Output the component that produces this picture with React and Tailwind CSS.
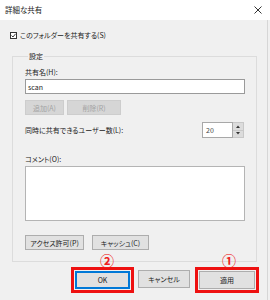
import React from 'react';

const font = { fontFamily: '"Noto Sans CJK JP", "Noto Sans", sans-serif' };

const Btn = ({ children, className = '' }) => (
  <div className={`flex items-center justify-center bg-[#e1e1e1] border border-[#adadad] text-[#1a1a1a] ${className}`}>
    {children}
  </div>
);

const App = () => {
  return (
    <div
      className="w-[270px] h-[300px] bg-[#f0f0f0] flex flex-col text-[7px] leading-[10px] text-[#1a1a1a] [font-feature-settings:'palt'] overflow-hidden"
      style={font}
    >
      {/* Title bar */}
      <div className="h-[20px] bg-white flex items-center justify-between pl-[5px] pr-[8px] shrink-0">
        <span className="text-[7.5px] text-[#222]">詳細な共有</span>
        <svg width="8" height="8" viewBox="0 0 8 8">
          <path d="M0.5 0.5 L7.5 7.5 M7.5 0.5 L0.5 7.5" stroke="#333" strokeWidth="1" />
        </svg>
      </div>

      <div className="flex flex-1">
        <div className="w-[268px] border-r border-[#d6d6d6] flex flex-col">
          {/* Share checkbox */}
          <div className="h-[10px] mt-[10px] ml-[10px] flex items-center gap-[3px]">
            <div className="w-[7px] h-[7px] border border-[#333] bg-white flex items-center justify-center">
              <svg width="5" height="5" viewBox="0 0 5 5">
                <path d="M0.5 2.5 L2 4 L4.6 0.8" stroke="#222" strokeWidth="0.9" fill="none" />
              </svg>
            </div>
            <span>このフォルダーを共有する(S)</span>
          </div>

          {/* Settings group */}
          <fieldset className="ml-[12px] mt-[11px] w-[245px] border border-[#dcdcdc] pl-[12px] pr-[11px] pb-[11px]">
            <legend className="ml-[3px] px-[1px] leading-[10px]">設定</legend>

            <div className="mt-[6px]">共有名(H):</div>
            <div className="mt-[2px] h-[15px] bg-white border border-[#9a9a9a] flex items-center pl-[2px]">scan</div>

            <div className="mt-[6px] flex gap-[3px]">
              <div className="w-[39px] h-[15px] bg-[#d6d6d6] border border-[#cdcdcd] text-[#a3a3a3] flex items-center justify-center">追加(A)</div>
              <div className="w-[54px] h-[15px] bg-[#d6d6d6] border border-[#cdcdcd] text-[#a3a3a3] flex items-center justify-center">削除(R)</div>
            </div>

            <div className="mt-[7px] h-[16px] flex items-center justify-between">
              <span>同時に共有できるユーザー数(L):</span>
              <div className="flex h-[16px] mr-[1px]">
                <div className="w-[31px] bg-white border border-[#a8a8a8] flex items-center pl-[3px] text-[#444]">20</div>
                <div className="w-[11px] flex flex-col bg-[#dcdcdc] border border-l-0 border-[#c8c8c8]">
                  <div className="flex-1 flex items-center justify-center border-b border-[#c8c8c8]">
                    <svg width="4" height="3" viewBox="0 0 4 3"><path d="M0 3 L2 0.5 L4 3 Z" fill="#333" /></svg>
                  </div>
                  <div className="flex-1 flex items-center justify-center">
                    <svg width="4" height="3" viewBox="0 0 4 3"><path d="M0 0 L4 0 L2 2.5 Z" fill="#333" /></svg>
                  </div>
                </div>
              </div>
            </div>

            <div className="mt-[16px]">コメント(O):</div>
            <div className="mt-[2px] h-[55px] bg-white border border-[#b4b4b4]" />

            <div className="mt-[14px] flex gap-[8px]">
              <Btn className="w-[59px] h-[15px]">アクセス許可(P)</Btn>
              <Btn className="w-[57px] h-[15px]">キャッシュ(C)</Btn>
            </div>
          </fieldset>

          {/* Dialog buttons */}
          <div className="mt-[5px] ml-[71px] flex items-start">
            <div className="relative w-[63px] h-[26px] border-[3px] border-[#ee1111] p-[1px]">
              <span className="absolute left-[26px] top-[-17px] text-[14px] leading-[14px] text-[#ee2222] font-bold">②</span>
              <div className="h-full flex items-center justify-center bg-[#e1e1e1] border-2 border-[#0078d7]">OK</div>
            </div>
            <Btn className="ml-[4px] mt-[3px] w-[52px] h-[18px]">キャンセル</Btn>
            <div className="relative ml-[5px] w-[64px] h-[26px] border-[3px] border-[#ee1111] p-[1px]">
              <span className="absolute left-[24px] top-[-17px] text-[14px] leading-[14px] text-[#ee2222] font-bold">①</span>
              <Btn className="h-full">適用</Btn>
            </div>
          </div>
        </div>
        <div className="w-[1px]" />
      </div>
    </div>
  );
};

export default App;
